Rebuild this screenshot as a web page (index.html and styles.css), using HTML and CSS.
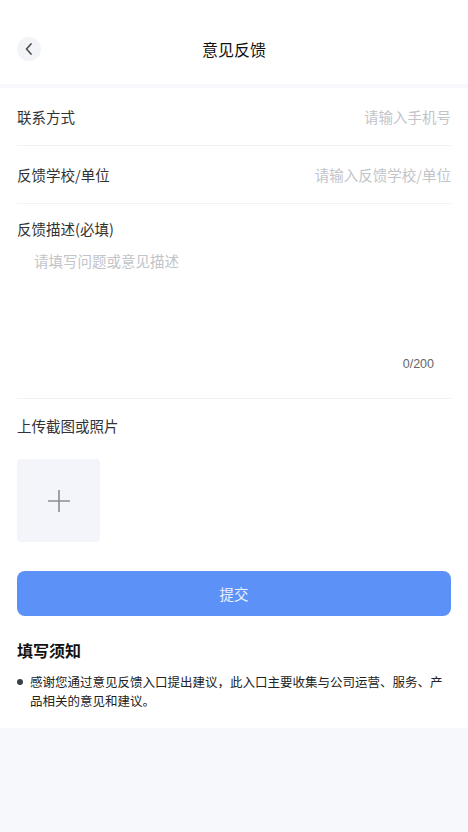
FILE: index.html
```html
<!DOCTYPE html>
<html lang="zh">
<head>
<meta charset="utf-8">
<title>意见反馈</title>
<link rel="stylesheet" href="styles.css">
</head>
<body>
<header class="header">
  <div class="nav">
    <button class="back" aria-label="返回">
      <svg width="12" height="14" viewBox="0 0 12 14"><path d="M8 2 L3.5 7 L8 12" fill="none" stroke="#555" stroke-width="1.8" stroke-linecap="round" stroke-linejoin="round"/></svg>
    </button>
    <h1 class="title">意见反馈</h1>
  </div>
</header>
<main class="card">
  <div class="row">
    <span class="label">联系方式</span>
    <input class="input" type="text" placeholder="请输入手机号">
  </div>
  <div class="row">
    <span class="label">反馈学校/单位</span>
    <input class="input" type="text" placeholder="请输入反馈学校/单位">
  </div>
  <div class="desc">
    <div class="label">反馈描述(必填)</div>
    <textarea class="textarea" placeholder="请填写问题或意见描述"></textarea>
    <div class="counter">0/200</div>
  </div>
  <div class="upload">
    <div class="label">上传截图或照片</div>
    <div class="upload-box">
      <svg width="24" height="24" viewBox="0 0 24 24"><path d="M12 1 V23 M1 12 H23" stroke="#8a8d94" stroke-width="1.6" fill="none"/></svg>
    </div>
    <button class="submit">提交</button>
    <h2 class="notice-title">填写须知</h2>
    <ul class="notice">
      <li>感谢您通过意见反馈入口提出建议，此入口主要收集与公司运营、服务、产品相关的意见和建议。</li>
    </ul>
  </div>
</main>
</body>
</html>
```

FILE: styles.css
```css
* { box-sizing: border-box; }
html, body { margin: 0; padding: 0; }
body {
  background: #f7f8fb;
  font-family: "Noto Sans CJK SC", "Noto Sans", sans-serif;
  color: #333;
  min-height: 832px;
}
.header {
  background: #fff;
  height: 84px;
  padding-top: 14px;
}
.nav {
  height: 70px;
  position: relative;
  display: flex;
  align-items: center;
  justify-content: center;
}
.back {
  position: absolute;
  left: 17px;
  top: 23px;
  width: 24px;
  height: 24px;
  border-radius: 50%;
  border: none;
  background: #f3f4f7;
  padding: 0;
  display: flex;
  align-items: center;
  justify-content: center;
}
.title {
  margin: 0;
  font-size: 16px;
  font-weight: 400;
  color: #111;
  line-height: 20px;
}
.card {
  background: #fff;
  margin-top: 4px;
  padding: 0 17px 18px;
}
.label {
  font-size: 14.5px;
  line-height: 20px;
  color: #333;
  white-space: nowrap;
}
.row {
  height: 58px;
  display: flex;
  align-items: center;
  justify-content: space-between;
  border-bottom: 1px solid #f1f2f4;
}
.input {
  border: none;
  outline: none;
  text-align: right;
  font-family: inherit;
  font-size: 14.5px;
  color: #333;
  padding: 0;
  flex: 1;
  min-width: 0;
  background: transparent;
}
.input::placeholder, .textarea::placeholder { color: #c2c4c8; }
.desc {
  padding-top: 15px;
  padding-bottom: 24px;
  border-bottom: 1px solid #f1f2f4;
}
.textarea {
  display: block;
  width: 100%;
  height: 107px;
  margin-top: 8px;
  border: none;
  outline: none;
  resize: none;
  padding: 4px 17px;
  font-family: inherit;
  font-size: 14.5px;
  line-height: 20px;
  color: #333;
}
.counter {
  text-align: right;
  padding-right: 17px;
  font-family: "Liberation Sans", Arial, sans-serif;
  font-size: 12.5px;
  line-height: 20px;
  color: #666;
}
.upload { padding-top: 17px; }
.upload-box {
  margin-top: 23px;
  width: 83px;
  height: 83px;
  border-radius: 4px;
  background: #f3f5fb;
  display: flex;
  align-items: center;
  justify-content: center;
}
.submit {
  display: block;
  width: 100%;
  height: 45px;
  margin-top: 29px;
  border: none;
  border-radius: 8px;
  background: #5c91f8;
  color: #eef3ff;
  font-family: inherit;
  font-size: 14.5px;
}
.notice-title {
  margin: 24px 0 0;
  font-size: 16px;
  line-height: 20px;
  font-weight: 700;
  color: #111;
}
.notice {
  list-style: none;
  margin: 12px 0 0;
  padding: 0;
}
.notice li {
  position: relative;
  padding-left: 13px;
  font-size: 12.5px;
  line-height: 19px;
  color: #222;
}
.notice li::before {
  content: "";
  position: absolute;
  left: 0;
  top: 7px;
  width: 6px;
  height: 6px;
  border-radius: 50%;
  background: #3a3f4a;
}
```
